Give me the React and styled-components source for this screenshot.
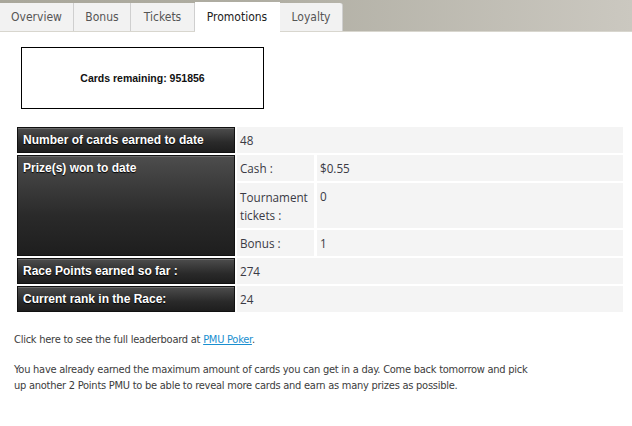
import styled, { createGlobalStyle } from "styled-components";

const Global = createGlobalStyle`
  body {
    margin: 0;
    background: #fff;
    font-family: "DejaVu Sans Condensed", "DejaVu Sans", sans-serif;
    font-stretch: condensed;
    font-size: 11px;
    color: #444;
  }
`;

const TabBar = styled.div`
  height: 31px;
  background: linear-gradient(90deg, #a9a79b 0%, #afada2 40%, #cbc8c0 100%);
  display: flex;
  align-items: flex-end;
  border-bottom: 1px solid #d8d6ce;
`;

const Tab = styled.div`
  width: ${(p) => p.w}px;
  box-sizing: border-box;
  display: flex;
  align-items: center;
  justify-content: center;
  background: ${(p) => (p.active ? "#fff" : "#f2f2f2")};
  color: ${(p) => (p.active ? "#222" : "#555")};
  border-right: 1px solid ${(p) => (p.active ? "#fff" : "#cfcfcf")};
  border-top-right-radius: ${(p) => (p.last ? "3px" : "0")};
  margin-bottom: ${(p) => (p.active ? "-1px" : "0")};
  height: ${(p) => (p.active ? "30px" : "28px")};
  font-size: 12px;
`;

const Content = styled.div`
  padding: 15px 14px 0 14px;
`;

const RemainingBox = styled.div`
  margin-left: 7px;
  width: 241px;
  height: 60px;
  border: 1px solid #000;
  display: flex;
  align-items: center;
  justify-content: center;
  font-family: "Liberation Sans", Arial, sans-serif;
  font-stretch: normal;
  font-weight: bold;
  font-size: 10.5px;
  color: #111;
`;

const Table = styled.table`
  margin: 16px 0 0 1px;
  width: 610px;
  border-collapse: separate;
  border-spacing: 2px;
`;

const Head = styled.th`
  width: 206px;
  text-align: left;
  vertical-align: top;
  padding: 4px 5px;
  height: 16px;
  line-height: 16px;
  color: #fff;
  font-family: "Liberation Sans", Arial, sans-serif;
  font-stretch: normal;
  font-weight: bold;
  font-size: 12px;
  background: linear-gradient(180deg, #4d4d4d 0%, #2a2a2a 60%, #1e1e1e 100%);
  border: 1px solid #111;
  box-shadow: inset 0 1px 0 #6a6a6a;
  text-shadow: 0 1px 1px #000;
`;

const Value = styled.td`
  background: ${(p) => (p.nested ? "transparent" : "#f4f4f4")};
  padding: ${(p) => (p.nested ? "0" : "5px 3px")};
  line-height: 16px;
  vertical-align: top;
  color: #3a3a44;
  font-family: "Open Sans", sans-serif;
  font-stretch: normal;
  font-size: 11.7px;
`;

const Prizes = styled.div`
  display: grid;
  grid-template-columns: 77px 1fr;
  gap: 2px 3px;
`;

const PrizeCell = styled.div`
  background: #f4f4f4;
  padding: ${(p) => (p.tall ? "5px 3px 4px" : "5px 3px")};
  line-height: ${(p) => (p.tall ? "18px" : "16px")};
  color: #3a3a44;
`;

const Text = styled.p`
  margin: 18px 0 0 0;
  max-width: 520px;
  line-height: 16px;
  letter-spacing: -0.25px;
  color: #3c3c3c;
  & + & {
    margin-top: 14px;
  }
`;

const Link = styled.a`
  color: #1a8fd0;
  text-decoration: underline;
`;

const tabs = [
  ["Overview", 74],
  ["Bonus", 57],
  ["Tickets", 64],
  ["Promotions", 85],
  ["Loyalty", 63],
];

export default function App() {
  return (
    <>
      <Global />
      <TabBar>
        {tabs.map(([t, w], i) => (
          <Tab key={t} w={w} active={t === "Promotions"} last={i === tabs.length - 1}>
            {t}
          </Tab>
        ))}
      </TabBar>
      <Content>
        <RemainingBox>Cards remaining: 951856</RemainingBox>
        <Table>
          <tbody>
            <tr>
              <Head>Number of cards earned to date</Head>
              <Value>48</Value>
            </tr>
            <tr>
              <Head>Prize(s) won to date</Head>
              <Value nested>
                <Prizes>
                  <PrizeCell>Cash :</PrizeCell>
                  <PrizeCell>$0.55</PrizeCell>
                  <PrizeCell tall>Tournament tickets :</PrizeCell>
                  <PrizeCell>0</PrizeCell>
                  <PrizeCell>Bonus :</PrizeCell>
                  <PrizeCell>1</PrizeCell>
                </Prizes>
              </Value>
            </tr>
            <tr>
              <Head>Race Points earned so far :</Head>
              <Value>274</Value>
            </tr>
            <tr>
              <Head>Current rank in the Race:</Head>
              <Value>24</Value>
            </tr>
          </tbody>
        </Table>
        <Text>
          Click here to see the full leaderboard at <Link href="#">PMU Poker</Link>.
        </Text>
        <Text>
          You have already earned the maximum amount of cards you can get in a day. Come back tomorrow and pick
          up another 2 Points PMU to be able to reveal more cards and earn as many prizes as possible.
        </Text>
      </Content>
    </>
  );
}
